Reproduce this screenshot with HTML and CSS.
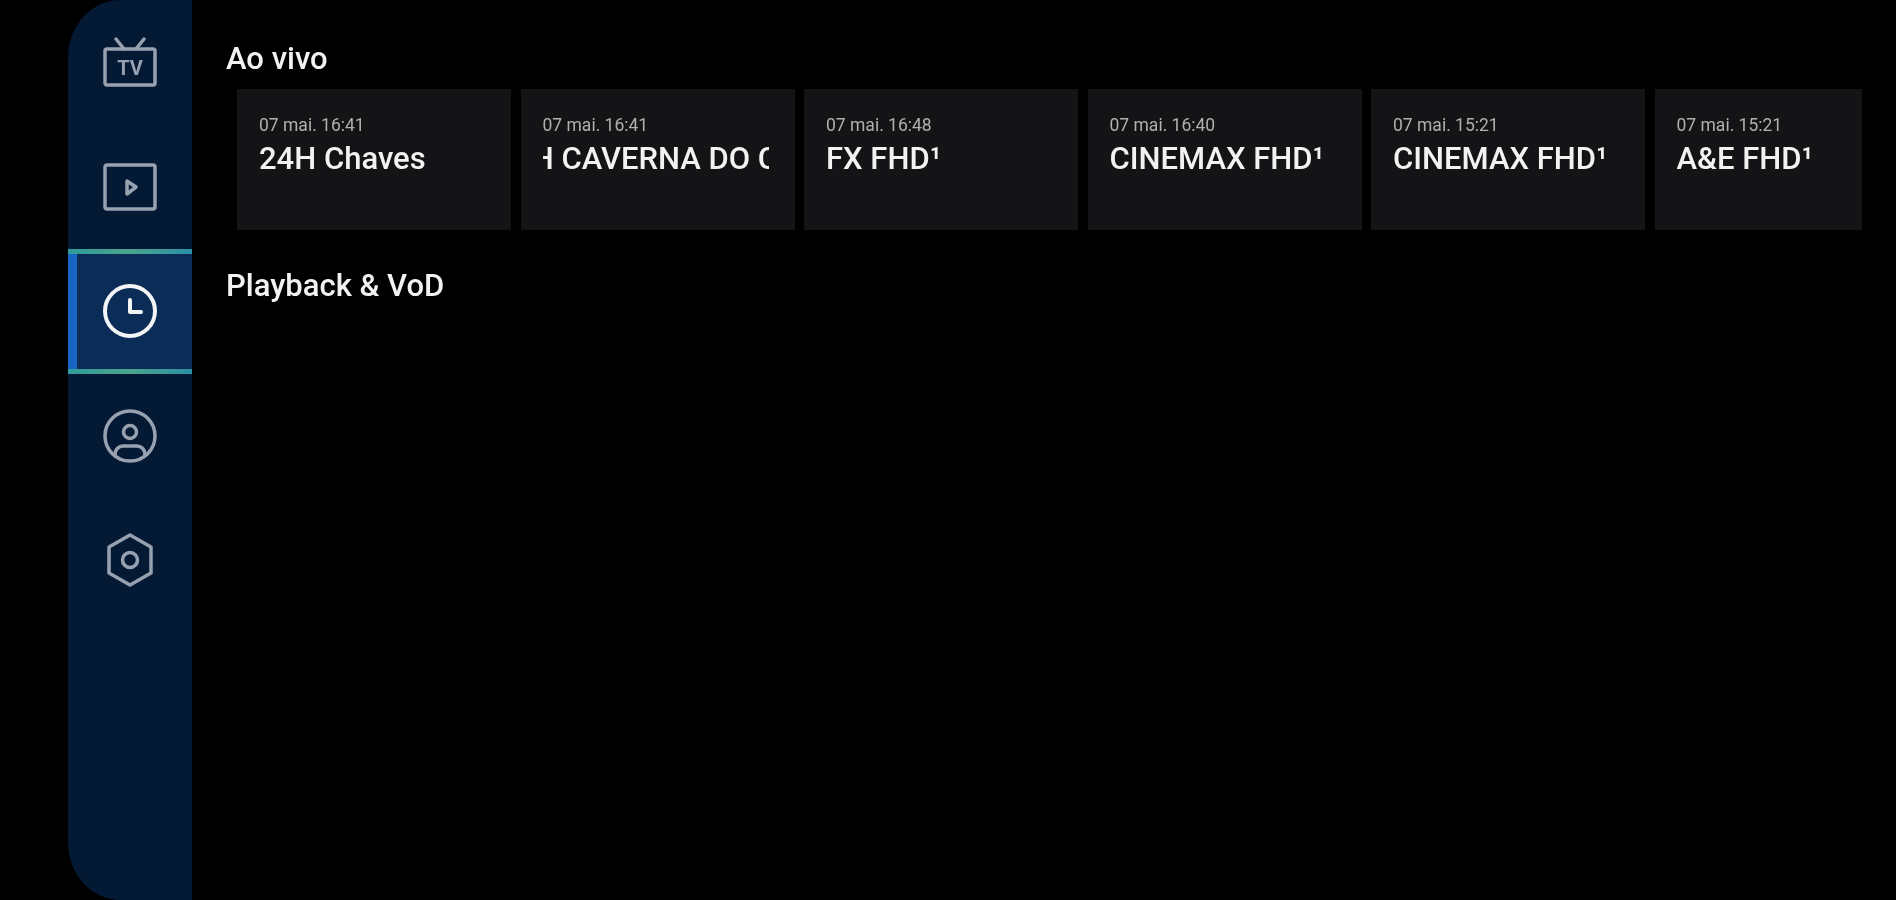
FILE: index.html
```html
<!DOCTYPE html>
<html lang="pt">
<head>
    <meta charset="UTF-8">
    <title>Recentes</title>
    <link rel="stylesheet" href="styles.css">
</head>
<body>
    <nav class="sidebar">
        <div class="nav-item">
            <svg class="icon" viewBox="0 0 54 50" width="54" height="50">
                <path d="M13 2l8 10M41 2l-8 10"/>
                <rect x="2" y="12" width="50" height="36" rx="2"/>
                <text x="27" y="38" class="tv-label">TV</text>
            </svg>
        </div>
        <div class="nav-item">
            <svg class="icon" viewBox="0 0 54 48" width="54" height="48">
                <rect x="2" y="2" width="50" height="44" rx="2"/>
                <path d="M24 18l9 6-9 7z"/>
            </svg>
        </div>
        <div class="nav-item active">
            <svg class="icon icon-bold" viewBox="0 0 54 54" width="54" height="54">
                <circle cx="27" cy="27" r="25"/>
                <path d="M27 16v12h11"/>
            </svg>
        </div>
        <div class="nav-item">
            <svg class="icon" viewBox="0 0 54 54" width="54" height="54">
                <circle cx="27" cy="27" r="25"/>
                <circle cx="27" cy="23" r="6.5"/>
                <path d="M12 46c0-6 4-9 8-9h14c4 0 8 3 8 9"/>
            </svg>
        </div>
        <div class="nav-item">
            <svg class="icon" viewBox="0 0 50 54" width="50" height="54">
                <path d="M25 2l21 12v26L25 52 4 40V14z"/>
                <circle cx="25" cy="27" r="7.5"/>
            </svg>
        </div>
    </nav>

    <main class="content">
        <h2 class="section-title">Ao vivo</h2>
        <div class="rail">
            <div class="card">
                <div class="card-date">07 mai. 16:41</div>
                <div class="card-title">24H Chaves</div>
            </div>
            <div class="card">
                <div class="card-date">07 mai. 16:41</div>
                <div class="card-title"><span class="scrolled">24H CAVERNA DO CHAVES</span></div>
            </div>
            <div class="card">
                <div class="card-date">07 mai. 16:48</div>
                <div class="card-title">FX FHD¹</div>
            </div>
            <div class="card">
                <div class="card-date">07 mai. 16:40</div>
                <div class="card-title">CINEMAX FHD¹</div>
            </div>
            <div class="card">
                <div class="card-date">07 mai. 15:21</div>
                <div class="card-title">CINEMAX FHD¹</div>
            </div>
            <div class="card">
                <div class="card-date">07 mai. 15:21</div>
                <div class="card-title">A&amp;E FHD¹</div>
            </div>
        </div>
        <h2 class="section-title">Playback &amp; VoD</h2>
    </main>
</body>
</html>
```

FILE: styles.css
```css
body {
    margin: 0;
    height: 900px;
    overflow: hidden;
    display: flex;
    background-color: #000000;
    font-family: Roboto, "Liberation Sans", sans-serif;
    color: #f2f2f2;
}
.sidebar {
    width: 124px;
    height: 900px;
    margin-left: 68px;
    flex-shrink: 0;
    background-color: #041a34;
    border-radius: 52px 0 0 52px / 58px 0 0 58px;
}
.nav-item {
    height: 124.5px;
    box-sizing: border-box;
    display: flex;
    align-items: center;
    justify-content: center;
    color: #98a1b0;
}
.nav-item.active {
    background-color: #0a2c56;
    border-top: 5px solid #2b8f9c;
    border-bottom: 5px solid #2b8f9c;
    border-image: linear-gradient(90deg, #2f9a9a, #4ba58c 50%, #2a8ea6) 1;
    box-shadow: inset 9px 0 0 #1766c4;
    color: #f2f4f6;
}
.icon {
    fill: none;
    stroke: currentColor;
    stroke-width: 3.5;
    stroke-linejoin: round;
    stroke-linecap: round;
    filter: blur(0.6px);
}
.icon-bold {
    stroke-width: 4;
}
.tv-label {
    font-size: 20px;
    font-weight: 700;
    text-anchor: middle;
    fill: currentColor;
    stroke: none;
}
.content {
    flex: 1;
    min-width: 0;
    padding: 0 34px;
}
.section-title {
    margin: 37px 0 0;
    font-size: 31px;
    line-height: 44px;
    font-weight: 500;
    filter: blur(0.7px);
}
.rail {
    display: flex;
    gap: 9.5px;
    margin: 8px 0 -3px 11px;
    overflow: hidden;
}
.card {
    flex: 0 0 274px;
    min-width: 0;
    height: 141px;
    box-sizing: border-box;
    padding: 26px 26px 0 22px;
    background-color: #141417;
}
.card-date {
    font-size: 17.5px;
    line-height: 20px;
    color: #b0b0b0;
    white-space: nowrap;
    filter: blur(0.7px);
}
.card-title {
    margin-top: 4px;
    font-size: 31px;
    line-height: 40px;
    font-weight: 500;
    white-space: nowrap;
    overflow: hidden;
    filter: blur(0.7px);
}
.scrolled {
    display: inline-block;
    margin-left: -46px;
}
```
